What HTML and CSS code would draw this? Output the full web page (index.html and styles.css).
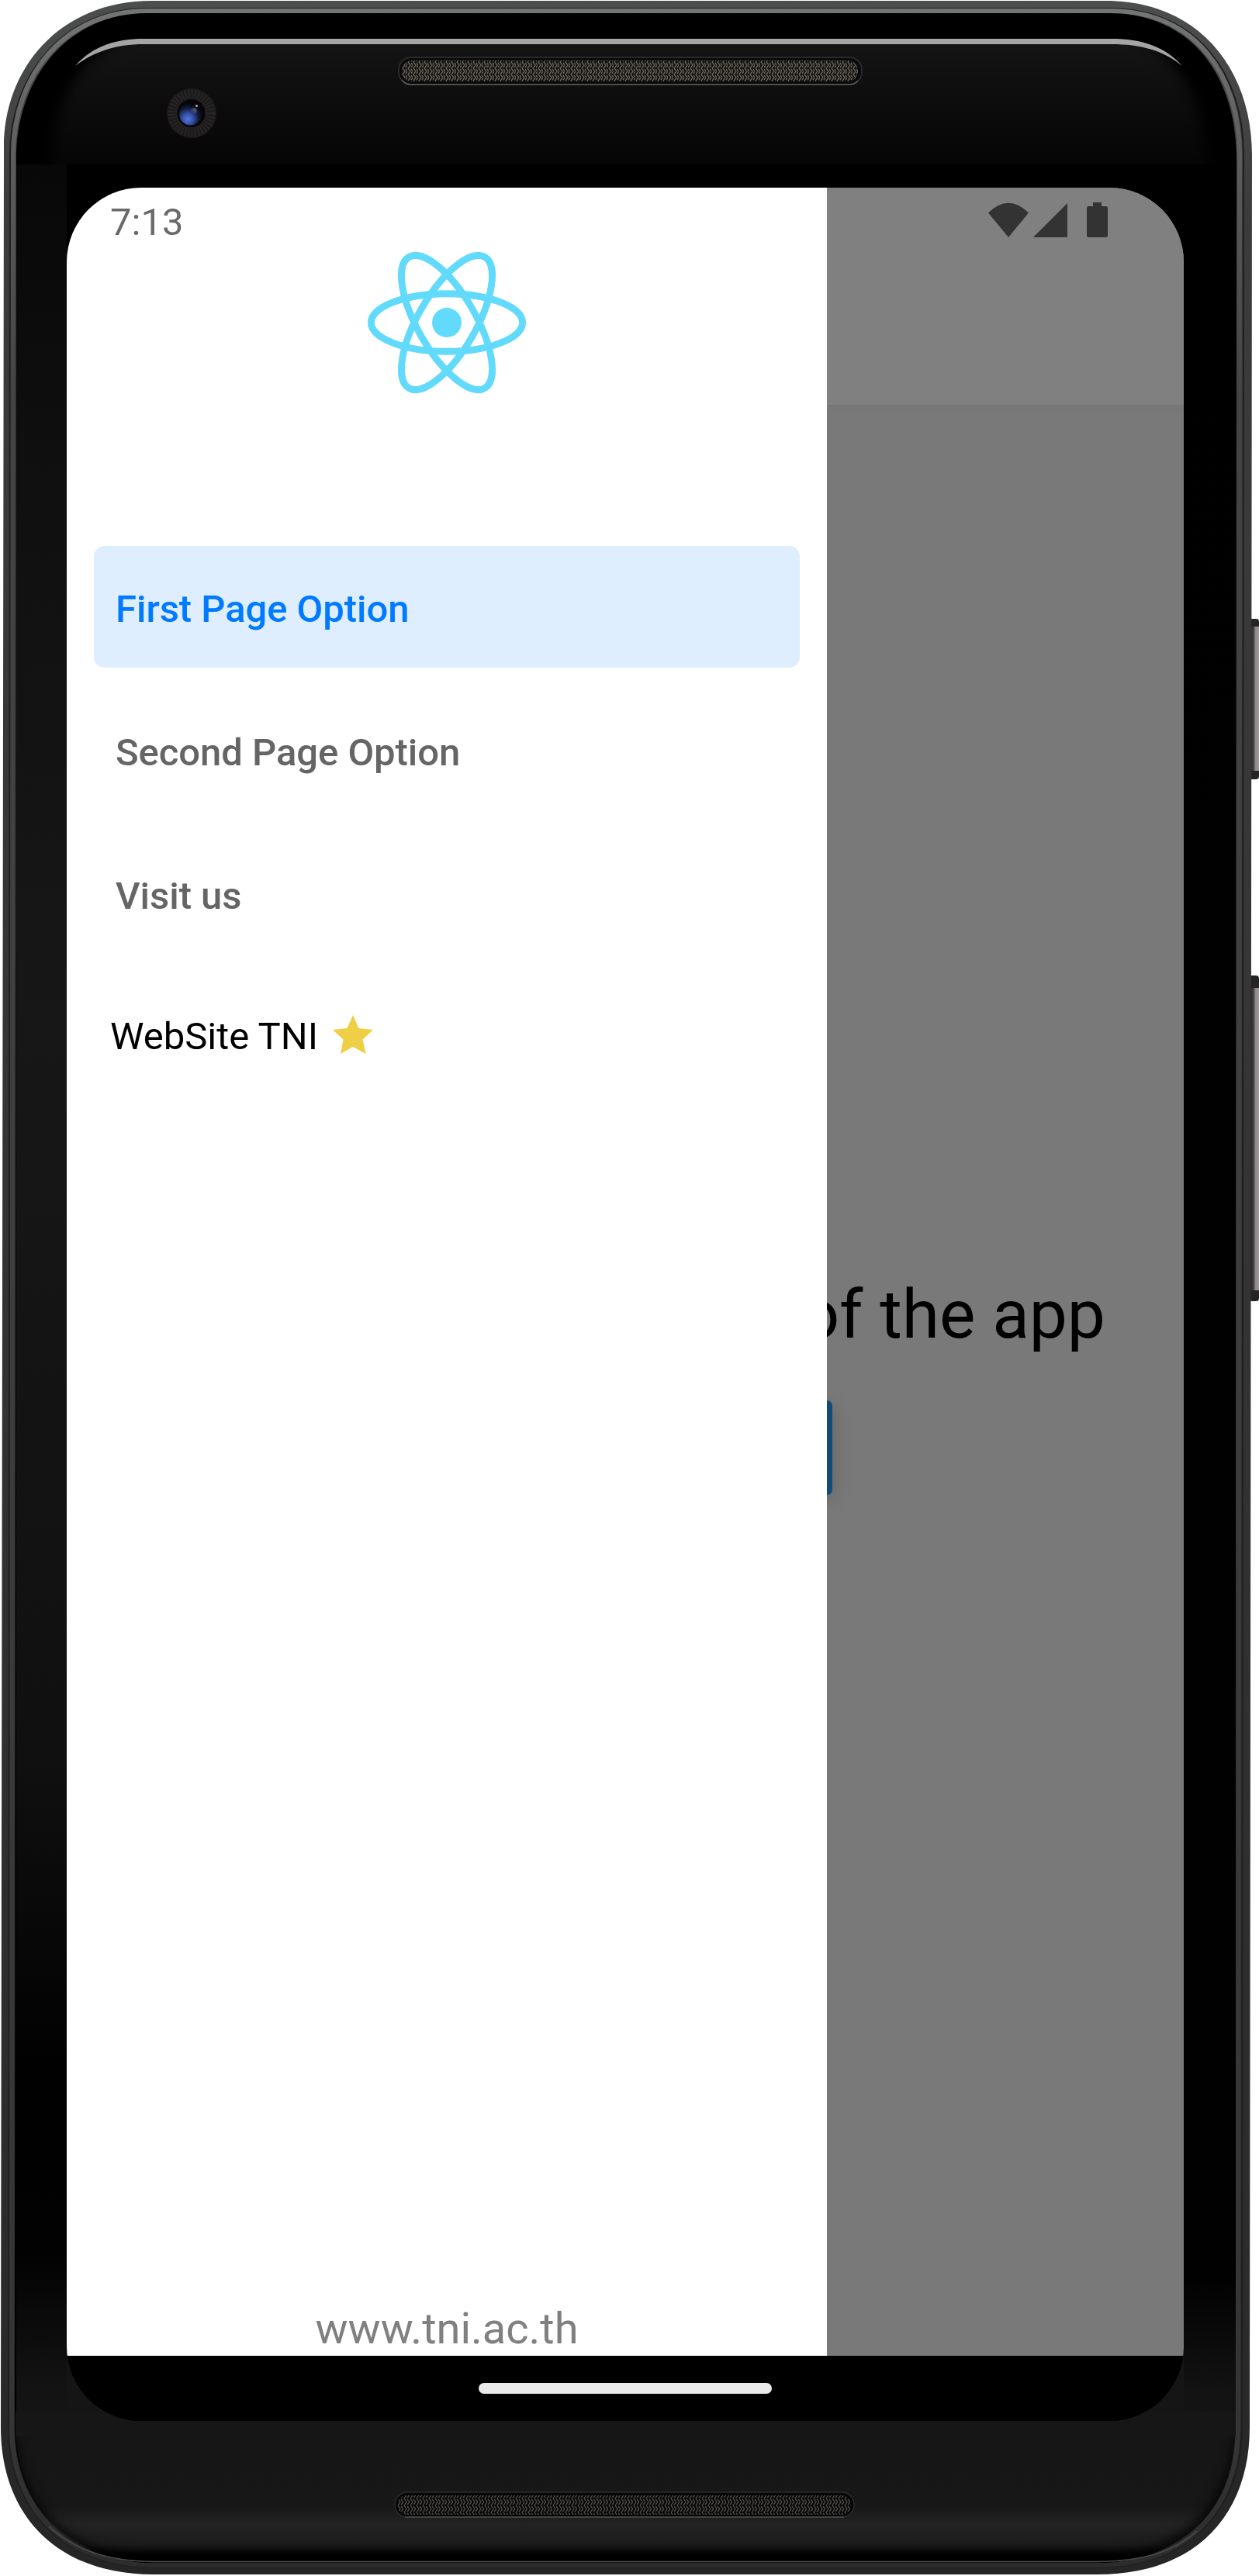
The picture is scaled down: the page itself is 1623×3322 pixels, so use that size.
FILE: index.html
```html
<!DOCTYPE html>
<html lang="en">
<head>
<meta charset="utf-8">
<title>Drawer navigation</title>
<link rel="stylesheet" href="styles.css">
</head>
<body>
<div class="device">
  <svg class="shell" width="1623" height="3322" viewBox="0 0 1623 3322" aria-hidden="true">
    <defs>
      <linearGradient id="rim" x1="0" y1="0" x2="0" y2="1">
        <stop offset="0" stop-color="#4c4e4d"/><stop offset=".08" stop-color="#3c3c3c"/><stop offset=".9" stop-color="#2b2b2b"/><stop offset="1" stop-color="#252525"/>
      </linearGradient>
      <linearGradient id="rimLight" x1="0" y1="0" x2="0" y2="1">
        <stop offset="0" stop-color="#747474"/><stop offset=".06" stop-color="#5c5c5c"/><stop offset=".15" stop-color="#444"/><stop offset=".95" stop-color="#353535"/><stop offset="1" stop-color="#2c2c2c"/>
      </linearGradient>
      <linearGradient id="topGlass" x1="0" y1="50" x2="0" y2="242" gradientUnits="userSpaceOnUse">
        <stop offset="0" stop-color="#151515"/><stop offset=".4" stop-color="#0d0d0d"/><stop offset="1" stop-color="#020202"/>
      </linearGradient>
      <linearGradient id="leftGlass" x1="0" y1="212" x2="0" y2="3140" gradientUnits="userSpaceOnUse">
        <stop offset="0" stop-color="#080808"/><stop offset=".15" stop-color="#101010"/><stop offset=".38" stop-color="#171717"/><stop offset=".7" stop-color="#101010"/><stop offset=".84" stop-color="#010101"/><stop offset=".92" stop-color="#020202"/><stop offset=".98" stop-color="#131313"/><stop offset="1" stop-color="#161616"/>
      </linearGradient>
      <linearGradient id="rightGlass" x1="0" y1="212" x2="0" y2="3140" gradientUnits="userSpaceOnUse">
        <stop offset="0" stop-color="#000"/><stop offset=".93" stop-color="#010101"/><stop offset=".98" stop-color="#121212"/><stop offset="1" stop-color="#151515"/>
      </linearGradient>
      <linearGradient id="bottomGlass" x1="0" y1="3110" x2="0" y2="3305" gradientUnits="userSpaceOnUse">
        <stop offset="0" stop-color="#161616"/><stop offset=".62" stop-color="#171717"/><stop offset=".75" stop-color="#232323"/><stop offset=".88" stop-color="#1b1b1b"/><stop offset=".95" stop-color="#000"/>
      </linearGradient>
      <pattern id="mesh" width="7" height="8" patternUnits="userSpaceOnUse">
        <rect width="7" height="8" fill="#13120f"/>
        <path d="M1 0l3 4l-3 4M5 1l2 3l-2 3" fill="none" stroke="#67635a" stroke-width="1.4"/>
      </pattern>
      <pattern id="meshDark" width="8" height="9" patternUnits="userSpaceOnUse">
        <rect width="8" height="9" fill="#090908"/>
        <path d="M1 0l3 4.500l-3 4.500M5 1l3 3.500l-3 3.500" fill="none" stroke="#504d47" stroke-width="1.300"/>
      </pattern>
      <radialGradient id="lens" cx=".38" cy=".72" r=".7">
        <stop offset="0" stop-color="#5078de"/><stop offset=".35" stop-color="#3450a4"/><stop offset=".7" stop-color="#111a3b"/><stop offset="1" stop-color="#06060a"/>
      </radialGradient>
      <linearGradient id="key" x1="0" y1="0" x2="1" y2="0">
        <stop offset="0" stop-color="#2b292a"/><stop offset=".35" stop-color="#4a4648"/><stop offset=".5" stop-color="#8c8487"/><stop offset="1" stop-color="#a0999b"/>
      </linearGradient>
      <filter id="soft" color-interpolation-filters="sRGB"><feGaussianBlur stdDeviation="8"/></filter>
      <clipPath id="forehead"><path d="M40 212V150L97 85C125 57 155 50 185 50H1433C1470 50 1503 62 1524 85L1580 150V212Z"/></clipPath>
      <clipPath id="chin"><path d="M20 3142H1592C1590 3240 1520 3303 1415 3303H198C92 3303 22 3232 20 3142Z"/></clipPath>
    </defs>
    <rect x="1610" y="798" width="13" height="207" rx="4" fill="#252324"/>
    <rect x="1613" y="808" width="10" height="186" fill="url(#key)"/>
    <rect x="1610" y="1258" width="13" height="420" rx="4" fill="#252324"/>
    <rect x="1613" y="1274" width="10" height="390" fill="url(#key)"/>
    <path d="M196 1H1425C1548 1 1614 92 1614 200L1611 3130C1611 3240 1545 3320 1415 3320H198C70 3320 1 3240 1 3130L5 190C5 90 75 1 196 1Z" fill="url(#rim)"/>
    <path d="M190 11H1430C1543 11 1603 95 1603 200L1601 3130C1601 3237 1532 3311 1415 3311H198C83 3311 11 3237 11 3130L13 200C13 95 83 11 190 11Z" fill="none" stroke="#1f1f1f" stroke-width="2"/>
    <path d="M190 14H1430C1540 14 1598 95 1598 200L1596 3130C1596 3235 1530 3308 1415 3308H198C85 3308 15 3235 15 3130L17 200C17 95 85 14 190 14Z" fill="none" stroke="url(#rimLight)" stroke-width="6"/>
    <path d="M190 17H1430C1537 17 1594 100 1594 205L1592 3130C1592 3232 1525 3305 1415 3305H198C90 3305 19 3232 19 3130L21 205C21 100 88 17 190 17Z" fill="#000"/>
    <g clip-path="url(#forehead)"><path d="M66 280V215C68 150 84 118 104 92C130 62 160 48 185 36H1433C1470 48 1500 62 1518 92C1545 125 1558 165 1558 280Z" fill="url(#topGlass)" filter="url(#soft)"/></g>
    <path d="M97 85C120 59 150 50 185 50H1433C1472 50 1502 60 1524 85C1500 65 1470 57 1433 57H185C150 57 120 67 97 85Z" fill="#a5a5a5"/>
    <rect x="21" y="212" width="65" height="2930" fill="url(#leftGlass)"/>
    <rect x="1526" y="212" width="67" height="2930" fill="url(#rightGlass)"/>
    <rect x="86" y="3020" width="1440" height="110" fill="#151515"/>
    <path d="M20 3110H1592V3130C1592 3232 1525 3305 1415 3305H198C90 3305 20 3232 20 3130Z" fill="url(#bottomGlass)"/>
    <path d="M12 3142C20 3245 92 3306 198 3306H1415C1520 3306 1592 3240 1600 3142" clip-path="url(#chin)" fill="none" stroke="#000" stroke-width="14" filter="url(#soft)"/>
    <path d="M63 3258C98 3290 140 3303 198 3303.500H1415C1475 3303 1515 3290 1543 3264" fill="none" stroke="#4d4d4d" stroke-width="1.500"/>
    <rect x="514" y="74" width="597" height="35" rx="16" fill="#0a0a0a" stroke="#29292b" stroke-width="2"/>
    <path d="M518 103Q522 109 530 109H1094Q1102 109 1106 104" fill="none" stroke="#5c5956" stroke-width="1.500"/>
    <rect x="518" y="78" width="588" height="27" rx="13" fill="url(#mesh)"/>
    <rect x="509" y="3214" width="592" height="32" rx="16" fill="#050505" stroke="#2c2c2c" stroke-width="1.500"/>
    <path d="M522 3246H1088" stroke="#514d4b" stroke-width="1.500"/>
    <rect x="512" y="3218" width="585" height="25" rx="12" fill="url(#meshDark)"/>
    <circle cx="247" cy="146" r="32" fill="#1c1a1b"/>
    <circle cx="247" cy="146" r="24" fill="none" stroke="#262425" stroke-width="13" stroke-dasharray="2 2"/>
    <circle cx="246.500" cy="146" r="18" fill="#060608"/>
    <circle cx="245.500" cy="147" r="14.500" fill="url(#lens)"/>
    <circle cx="250" cy="143" r="4" fill="#41376f"/><circle cx="251" cy="142" r="2" fill="#34634f"/>
    <circle cx="253.500" cy="136.500" r="1.600" fill="#d78bc0"/>
  </svg>

  <main class="screen">
    <div class="app">
      <aside class="drawer">
        <div class="clock">7:13</div>
        <svg class="logo" width="206" height="184" viewBox="-103 -92 206 184" aria-label="React">
          <circle r="19" fill="#61dafb"/>
          <g fill="none" stroke="#61dafb" stroke-width="8.900">
            <ellipse rx="97.600" ry="37.300"/>
            <ellipse rx="97.600" ry="37.300" transform="rotate(60)"/>
            <ellipse rx="97.600" ry="37.300" transform="rotate(120)"/>
          </g>
        </svg>
        <nav class="menu">
          <a class="item active">First Page Option</a>
          <a class="item">Second Page Option</a>
          <a class="item">Visit us</a>
        </nav>
        <div class="website">WebSite TNI
          <svg class="star" width="52" height="50" viewBox="0 0 52 50" aria-hidden="true"><path d="M26 0L33.500 17L52 19L38.500 31.500L42.500 50L26 41L10 50L13.500 31.500L0 19L18.500 17Z" fill="#eecf45"/></svg>
        </div>
        <footer class="address">www.tni.ac.th</footer>
      </aside>
      <section class="page">
        <header class="topbar">
          <svg width="156" height="46" viewBox="0 0 156 46" aria-hidden="true" fill="#333">
            <path d="M0 13.500Q26-12 52 13.500L26 45Z"/>
            <path d="M102 1V45H58Z"/>
            <path d="M135 0H146V5H152Q154 5 154 7V43Q154 45 152 45H129Q127 45 127 43V7Q127 5 129 5H135Z"/>
          </svg>
        </header>
        <div class="content">
          <p class="headline">of the app</p>
          <div class="action"></div>
        </div>
      </section>
    </div>
    <div class="navbar"><div class="handle"></div></div>
  </main>
</div>
</body>
</html>
```
FILE: styles.css
```css
* { box-sizing: border-box; }
body { margin: 0; background: #fff; font-family: Roboto, "Liberation Sans", sans-serif; }
.device { position: relative; width: 1623px; height: 3322px; padding: 242px 97px 200px 86px; overflow: hidden; }
.shell { position: absolute; left: 0; top: 0; }
.screen { position: relative; width: 1440px; height: 2880px; border-radius: 96px; overflow: hidden; background: #000; display: flex; flex-direction: column; }
.app { display: flex; height: 2796px; }
.drawer { position: relative; z-index: 1; width: 980px; flex: none; background: #fff; display: flex; flex-direction: column; }
.clock { height: 82px; padding: 16px 0 0 56px; font-size: 49px; line-height: 58px; color: #6a6a6a; }
.logo { align-self: center; flex: none; }
.menu { display: flex; flex-direction: column; gap: 28px; padding: 196px 35px 0; }
.item { height: 157px; padding-left: 28px; border-radius: 14px; font-size: 49px; line-height: 163px; font-weight: 500; letter-spacing: -.05px; color: #656565; }
.item.active { background: #dfeeff; color: #007aff; }
.website { display: flex; align-items: center; gap: 19px; height: 66px; margin: 73px 56px 0; font-size: 49px; line-height: 66px; color: #000; }
.star { flex: none; margin-top: -6px; }
.address { margin-top: auto; height: 68px; font-size: 56px; line-height: 66px; text-align: center; color: #808080; }
.page { flex: 1; min-width: 0; background: #797979; display: flex; flex-direction: column; }
.topbar { height: 280px; flex: none; background: #808080; box-shadow: 0 1px 6px #747474; padding: 19px 96px 0 0; display: flex; justify-content: flex-end; align-items: flex-start; }
.content { flex: 1; display: flex; flex-direction: column; align-items: flex-end; padding: 1121px 101px 0 0; }
.headline { margin: 0; font-size: 87.500px; line-height: 104px; white-space: nowrap; color: #000; }
.action { width: 534px; height: 122px; flex: none; margin: 59px 352px 0 0; border-radius: 7px; background: #114c78; box-shadow: 0 6px 24px rgba(0,0,0,.18); }
.navbar { height: 84px; display: flex; justify-content: center; align-items: center; background: #000; }
.handle { width: 378px; height: 14px; border-radius: 7px; background: #ebebeb; }
```
